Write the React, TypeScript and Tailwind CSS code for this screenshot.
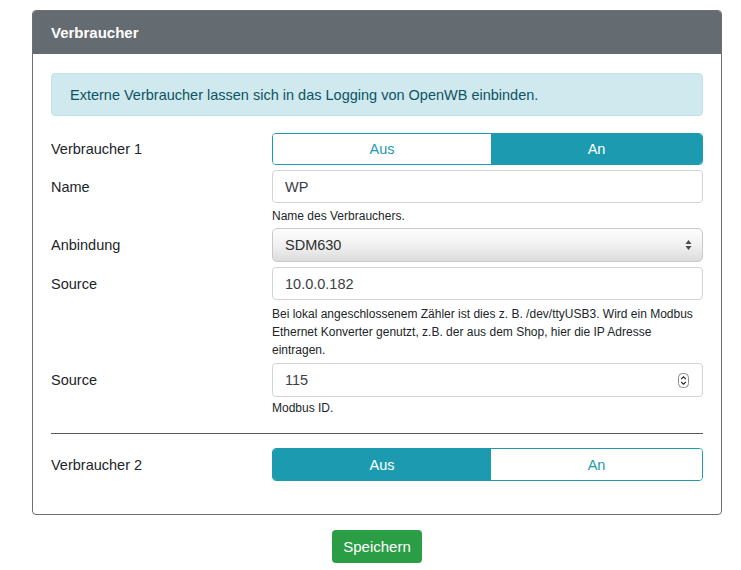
import React from "react";

function Toggle({ on }: { on: boolean }) {
  return (
    <div className="flex h-full w-full overflow-hidden rounded-[4px] border border-[#1c9ab0] text-[14.5px]">
      <div
        className={
          on
            ? "flex w-[218px] items-center justify-center bg-white pt-[2px] text-[#1c9ab0]"
            : "flex w-[218px] items-center justify-center bg-[#1c9ab0] pt-[2px] text-white"
        }
      >
        Aus
      </div>
      <div
        className={
          on
            ? "flex flex-1 items-center justify-center bg-[#1c9ab0] pt-[2px] text-white"
            : "flex flex-1 items-center justify-center bg-white pt-[2px] text-[#1c9ab0]"
        }
      >
        An
      </div>
    </div>
  );
}

function Label({ children, h }: { children: React.ReactNode; h: string }) {
  return <div className={`flex items-center pt-[2px] ${h}`}>{children}</div>;
}

export default function App() {
  return (
    <div className="min-h-screen bg-white pt-[10px] font-['Liberation_Sans',Arial,sans-serif] text-[#212529]">
      <div className="ml-[32px] w-[690px] overflow-hidden rounded-[4px] border border-[#6f6f6f]">
        <div className="flex h-[43px] items-center bg-[#646c72] px-[18px] pt-[1px] text-[15px] font-bold text-white">
          Verbraucher
        </div>
        <div className="px-[18px] pb-[33px] pt-[19px]">
          <div className="flex h-[43px] items-center rounded-[4px] border border-[#bfe3ea] bg-[#cfe9ef] px-[18px] pt-[3px] text-[14.5px] text-[#0e5462]">
            Externe Verbraucher lassen sich in das Logging von OpenWB einbinden.
          </div>

          <div className="mt-[17px] grid grid-cols-[221px_1fr] text-[14.5px]">
            {/* Verbraucher 1 */}
            <Label h="h-[32px]">Verbraucher 1</Label>
            <div className="h-[32px]">
              <Toggle on={true} />
            </div>

            {/* Name */}
            <Label h="mt-[5px] h-[33px]">Name</Label>
            <div className="mt-[5px]">
              <div className="flex h-[33px] items-center rounded-[4px] border border-[#cfd4d9] bg-white px-[12px] pt-[2px] text-[#3b4047]">
                WP
              </div>
              <div className="mt-[4px] text-[12px] leading-[18px]">Name des Verbrauchers.</div>
            </div>

            {/* Anbindung */}
            <Label h="mt-[3px] h-[34px]">Anbindung</Label>
            <div className="mt-[3px]">
              <div className="flex h-[34px] items-center justify-between rounded-[5px] border border-[#c9c9c9] bg-gradient-to-b from-[#fdfdfd] via-[#f1f1f1] to-[#dcdcdc] pl-[12px] pr-[10px] text-[#2e2e2e]">
                <span className="pt-[2px]">SDM630</span>
                <svg width="7" height="12" viewBox="0 0 7 12">
                  <path d="M3.5 1 L6.5 5 L0.5 5 Z" fill="#4a4a4a" />
                  <path d="M3.5 11 L6.5 7 L0.5 7 Z" fill="#4a4a4a" />
                </svg>
              </div>
            </div>

            {/* Source */}
            <Label h="mt-[5px] h-[33px]">Source</Label>
            <div className="mt-[5px]">
              <div className="flex h-[33px] items-center rounded-[4px] border border-[#cfd4d9] bg-white px-[12px] pt-[2px] text-[#3b4047]">
                10.0.0.182
              </div>
              <div className="mt-[5px] text-[12px] leading-[18px]">
                Bei lokal angeschlossenem Zähler ist dies z. B. /dev/ttyUSB3. Wird ein Modbus Ethernet Konverter genutzt,
                z.B. der aus dem Shop, hier die IP Adresse eintragen.
              </div>
            </div>

            {/* Source 2 */}
            <Label h="mt-[4px] h-[34px]">Source</Label>
            <div className="mt-[4px]">
              <div className="flex h-[34px] items-center justify-between rounded-[4px] border border-[#cfd4d9] bg-white pl-[12px] pr-[13px] text-[#3b4047]">
                <span className="pt-[2px]">115</span>
                <svg width="11" height="15" viewBox="0 0 11 15">
                  <rect x="0.5" y="0.5" width="10" height="14" rx="4" fill="none" stroke="#8a8a8a" />
                  <path d="M3.2 6 L5.5 3.8 L7.8 6" fill="none" stroke="#333" strokeWidth="1.1" />
                  <path d="M3.2 9 L5.5 11.2 L7.8 9" fill="none" stroke="#333" strokeWidth="1.1" />
                </svg>
              </div>
              <div className="mt-[2px] text-[12px] leading-[18px]">Modbus ID.</div>
            </div>
          </div>

          <div className="mt-[16px] h-px bg-[#5a5a5a]" />

          <div className="mt-[14px] grid grid-cols-[221px_1fr] text-[14.5px]">
            <Label h="h-[33px]">Verbraucher 2</Label>
            <div className="h-[33px]">
              <Toggle on={false} />
            </div>
          </div>
        </div>
      </div>

      <div className="ml-[32px] mt-[15px] flex w-[690px] justify-center">
        <button className="h-[33px] w-[90px] rounded-[4px] bg-[#2a9d45] pt-[1px] text-[15px] text-white">Speichern</button>
      </div>
    </div>
  );
}
